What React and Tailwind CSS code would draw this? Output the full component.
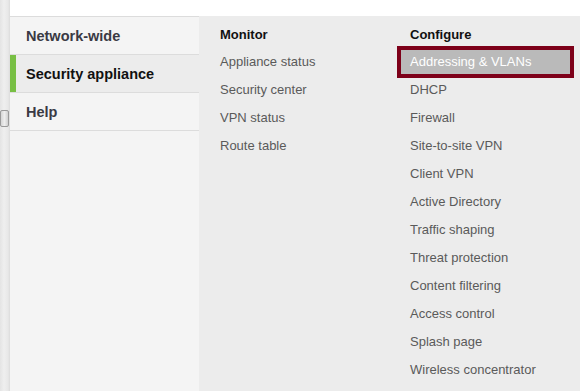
import React from "react";

const monitor = ["Appliance status", "Security center", "VPN status", "Route table"];
const configure = [
  "Addressing & VLANs",
  "DHCP",
  "Firewall",
  "Site-to-site VPN",
  "Client VPN",
  "Active Directory",
  "Traffic shaping",
  "Threat protection",
  "Content filtering",
  "Access control",
  "Splash page",
  "Wireless concentrator",
];

export default function App() {
  return (
    <div className="flex w-[580px] h-[391px] overflow-hidden font-['Liberation_Sans',Arial,sans-serif]">
      <div className="relative w-[10px] shrink-0 bg-[linear-gradient(90deg,#e4e4e4,#efefef_40%,#e8e8e8_80%,#dcdcdc)]">
        <div className="absolute left-0 top-[110px] w-[9px] h-[17px] rounded-[2px] border border-[#9a9a9a] bg-[linear-gradient(90deg,#d6d6d6,#eeeeee,#d0d0d0)]" />
      </div>
      <div className="flex-1 flex flex-col">
        <div className="h-[16px] bg-white shrink-0" />
        <div className="flex flex-1">
          <div className="w-[189px] shrink-0 bg-[#f4f4f4] border-t border-[#dcdcdc]">
            <div className="h-[38px] pt-[2px] border-b border-[#dcdcdc] flex items-center pl-[16px] text-[14.5px] font-bold text-[#3a3a44]">
              Network-wide
            </div>
            <div className="h-[38px] border-b border-[#dcdcdc] flex items-center bg-[#ececec]">
              <div className="w-[6px] h-full bg-[#78bf44]" />
              <span className="pl-[10px] pt-[2px] text-[14.5px] font-bold text-[#111]">Security appliance</span>
            </div>
            <div className="h-[38px] pt-[2px] border-b border-[#dcdcdc] flex items-center pl-[16px] text-[14.5px] font-bold text-[#3a3a44]">
              Help
            </div>
          </div>
          <div className="flex-1 bg-[#ececec] flex pl-[21px] pt-[6px] text-[13px]">
            <div className="w-[190px] flex flex-col">
              <div className="h-[26px] flex items-center font-bold text-[#111]">Monitor</div>
              {monitor.map((m) => (
                <div key={m} className="h-[28px] flex items-center text-[#5a5a5a]">{m}</div>
              ))}
            </div>
            <div className="flex flex-col">
              <div className="h-[26px] flex items-center font-bold text-[#111]">Configure</div>
              {configure.map((c, i) =>
                i === 0 ? (
                  <div
                    key={c}
                    className="h-[32px] -my-[2px] -ml-[13px] w-[177px] border-4 border-[#7d0019] bg-[#bababa] pl-[9px] flex items-center text-white"
                  >
                    {c}
                  </div>
                ) : (
                  <div key={c} className="h-[28px] flex items-center text-[#5a5a5a]">{c}</div>
                )
              )}
            </div>
          </div>
        </div>
      </div>
    </div>
  );
}
